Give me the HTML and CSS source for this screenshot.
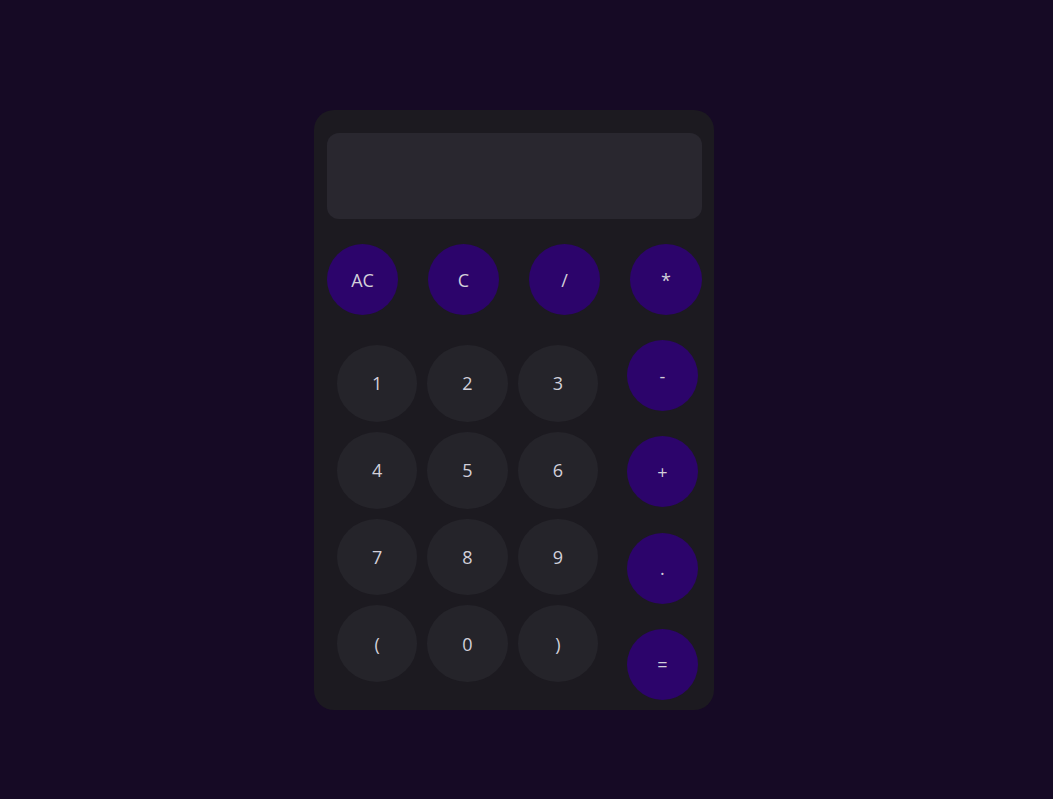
FILE: index.html
```html
<!DOCTYPE html>
<html lang="en">
<head>
<meta charset="utf-8">
<title>Calculator</title>
<link rel="stylesheet" href="styles.css">
</head>
<body>
<div class="calculator">
  <div class="display"></div>
  <div class="top-row">
    <button class="key op">AC</button>
    <button class="key op">C</button>
    <button class="key op">/</button>
    <button class="key op wide">*</button>
  </div>
  <div class="lower">
    <div class="numbers">
      <button class="key num">1</button>
      <button class="key num">2</button>
      <button class="key num">3</button>
      <button class="key num">4</button>
      <button class="key num">5</button>
      <button class="key num">6</button>
      <button class="key num">7</button>
      <button class="key num">8</button>
      <button class="key num">9</button>
      <button class="key num">(</button>
      <button class="key num">0</button>
      <button class="key num">)</button>
    </div>
    <div class="ops">
      <button class="key op">-</button>
      <button class="key op">+</button>
      <button class="key op">.</button>
      <button class="key op">=</button>
    </div>
  </div>
</div>
</body>
</html>
```

FILE: styles.css
```css
html, body {
  margin: 0;
  padding: 0;
  background: #160a25;
  height: 100%;
}
body {
  font-family: "Open Sans", "Noto Sans", sans-serif;
}
.calculator {
  box-sizing: border-box;
  width: 400px;
  height: 600px;
  margin: 110px 0 0 314px;
  padding: 23px 12px 10px 13px;
  background: #1c1a20;
  border-radius: 20px;
  display: flex;
  flex-direction: column;
}
.display {
  height: 86px;
  background: #29272f;
  border-radius: 12px;
}
.top-row {
  display: flex;
  justify-content: space-between;
  margin-top: 25px;
}
.key {
  border: none;
  padding: 0;
  margin: 0;
  color: #d2d0da;
  font-family: inherit;
  font-size: 18px;
  border-radius: 50%;
  display: flex;
  align-items: center;
  justify-content: center;
}
.op {
  width: 71px;
  height: 71px;
  background: #2c046b;
}
.op.wide {
  width: 72px;
}
.lower {
  display: flex;
  margin-top: 25px;
}
.numbers {
  display: grid;
  grid-template-columns: repeat(3, 80.33px);
  grid-auto-rows: 76.75px;
  gap: 10px;
  margin: 5px 0 0 10px;
  align-content: start;
}
.num {
  width: 100%;
  height: 100%;
  background: #25242a;
}
.ops {
  display: flex;
  flex-direction: column;
  gap: 25.3px;
  margin-left: 29px;
}
```
